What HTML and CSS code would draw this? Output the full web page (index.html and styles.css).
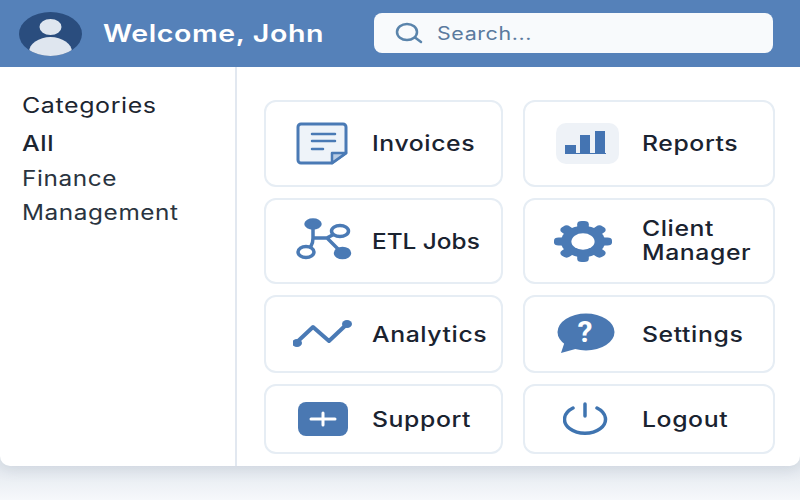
FILE: index.html
```html
<!DOCTYPE html>
<html lang="en">
<head>
    <meta charset="UTF-8">
    <title>Dashboard</title>
    <link rel="stylesheet" href="styles.css">
</head>
<body>
    <div class="app">
        <header class="topbar">
            <svg class="avatar" width="63" height="44" viewBox="0 0 63 44">
                <defs><clipPath id="avatarClip"><ellipse cx="31.5" cy="22" rx="31.5" ry="22"/></clipPath></defs>
                <ellipse cx="31.5" cy="22" rx="31.5" ry="22" fill="#2a4d7e"/>
                <g clip-path="url(#avatarClip)" fill="#dfe6ef">
                    <ellipse cx="31.5" cy="15" rx="11" ry="8"/>
                    <ellipse cx="31.5" cy="40" rx="21.5" ry="15"/>
                </g>
            </svg>
            <div class="welcome">Welcome, John</div>
            <div class="search">
                <svg width="28" height="22" viewBox="0 0 28 22" fill="none" stroke="#5a84ab" stroke-width="2.5" stroke-linecap="round">
                    <ellipse cx="12" cy="10" rx="10" ry="8"/>
                    <path d="M20 15.500 L26 20"/>
                </svg>
                <span>Search...</span>
            </div>
        </header>
        <div class="content">
            <aside class="sidebar">
                <h2>Categories</h2>
                <a class="active">All</a>
                <a>Finance</a>
                <a>Management</a>
            </aside>
            <main class="grid">
                <div class="card">
                    <div class="icon-wrap">
                        <svg width="54" height="44" viewBox="0 0 54 44">
                            <path d="M5 2H47a3 3 0 0 1 3 3V31L36 41H5a3 3 0 0 1-3-3V5a3 3 0 0 1 3-3z" fill="#eef3f9" stroke="#4a7ab5" stroke-width="3" stroke-linejoin="round"/>
                            <path d="M36 41V31H50z" fill="#b8cce4" stroke="#4a7ab5" stroke-width="2.500" stroke-linejoin="round"/>
                            <path d="M16 12H39M16 19H39M16 27H27" stroke="#4a7ab5" stroke-width="2.500" stroke-linecap="round"/>
                        </svg>
                    </div>
                    <span>Invoices</span>
                </div>
                <div class="card">
                    <div class="icon-wrap">
                        <svg width="63" height="41" viewBox="0 0 63 41">
                            <rect width="63" height="41" rx="10" fill="#eef2f7"/>
                            <path d="M9 22H20V31H9zM24 12H34V31H24zM39 8H49V31H39z" fill="#4474b2"/>
                            <path d="M9 30.500H50" stroke="#4474b2"/>
                        </svg>
                    </div>
                    <span>Reports</span>
                </div>
                <div class="card">
                    <div class="icon-wrap">
                        <svg width="58" height="46" viewBox="0 0 58 46" fill="none" stroke="#4a7ab5" stroke-width="3.500">
                            <path d="M19 6V20C19 27 16 30 12 34M19 20H33M46 13L33 20L48 35"/>
                            <ellipse cx="19" cy="6" rx="7" ry="4" fill="#4a7ab5"/>
                            <ellipse cx="46" cy="13" rx="8.500" ry="5.500" fill="#fff"/>
                            <ellipse cx="12" cy="34" rx="8" ry="5.500" fill="#fff"/>
                            <ellipse cx="48.500" cy="35" rx="7" ry="4.500" fill="#4a7ab5"/>
                        </svg>
                    </div>
                    <span class="tight">ETL Jobs</span>
                </div>
                <div class="card">
                    <div class="icon-wrap">
                        <svg class="gear" width="58" height="41" viewBox="-50 -50 100 100" preserveAspectRatio="none" fill="#4a7ab5">
                            <circle r="38"/>
                            <rect x="-50" y="-10" width="100" height="20" rx="8"/>
                            <rect x="-10" y="-50" width="20" height="100" rx="8"/>
                            <rect x="-50" y="-10" width="100" height="20" rx="8" transform="rotate(45)"/>
                            <rect x="-50" y="-10" width="100" height="20" rx="8" transform="rotate(-45)"/>
                            <circle r="20" fill="#fff"/>
                        </svg>
                    </div>
                    <span class="wrap">Client<br>Manager</span>
                </div>
                <div class="card">
                    <div class="icon-wrap">
                        <svg width="60" height="44" viewBox="0 0 60 44">
                            <path d="M3 31L20 15L36 29L54 12" fill="none" stroke="#4a7ab5" stroke-width="4" stroke-linecap="round" stroke-linejoin="round"/>
                            <ellipse cx="4" cy="31" rx="5" ry="4" fill="#4a7ab5"/>
                            <ellipse cx="54" cy="12" rx="5" ry="4" fill="#4a7ab5"/>
                        </svg>
                    </div>
                    <span>Analytics</span>
                </div>
                <div class="card">
                    <div class="icon-wrap">
                        <svg width="60" height="46" viewBox="0 0 60 46">
                            <ellipse cx="29" cy="21" rx="28.500" ry="18.500" fill="#4a78b2"/>
                            <path d="M8 30L4 42L22 37z" fill="#4a78b2"/>
                            <text x="28" y="31" class="qmark">?</text>
                        </svg>
                    </div>
                    <span>Settings</span>
                </div>
                <div class="card">
                    <div class="icon-wrap">
                        <svg width="50" height="34" viewBox="0 0 50 34">
                            <rect x="0" y="0" width="50" height="34" rx="8" fill="#4a78b2"/>
                            <path d="M13 17H37M25 11V23" stroke="#fff" stroke-width="3" stroke-linecap="round"/>
                        </svg>
                    </div>
                    <span>Support</span>
                </div>
                <div class="card">
                    <div class="icon-wrap">
                        <svg width="48" height="36" viewBox="0 0 48 36" fill="none" stroke="#3f74b0" stroke-width="3.500" stroke-linecap="round">
                            <path d="M10 7A20.500 14 0 1 0 34 7"/>
                            <path d="M22 3V15"/>
                        </svg>
                    </div>
                    <span>Logout</span>
                </div>
            </main>
        </div>
    </div>
</body>
</html>
```

FILE: styles.css
```css
body {
    margin: 0;
    height: 500px;
    overflow: hidden;
    font-family: Inter, "Liberation Sans", sans-serif;
    background: linear-gradient(to bottom, #e4e9ef 466px, #f6f8fb 500px);
}
.app {
    height: 466px;
    background: white;
    border-radius: 0 0 10px 10px;
    box-shadow: 0px 4px 14px rgba(60, 80, 110, 0.12);
    overflow: hidden;
    display: flex;
    flex-direction: column;
}
/* the lettering in this design is set wide */
.welcome,
.search span,
.sidebar h2,
.sidebar a,
.card span {
    display: inline-block;
    transform: scaleX(1.19);
    transform-origin: left center;
    letter-spacing: 0.5px;
}
.topbar {
    height: 67px;
    flex-shrink: 0;
    background: #5581b9;
    display: flex;
    align-items: center;
    padding: 0 27px 0 19px;
}
.avatar {
    margin-right: 21px;
}
.welcome {
    color: white;
    font-size: 24px;
    font-weight: 600;
}
.search {
    margin: 0 0 1px auto;
    width: 399px;
    height: 40px;
    box-sizing: border-box;
    background: #f8fafc;
    border-radius: 8px;
    display: flex;
    align-items: center;
    padding-left: 21px;
    gap: 14px;
    color: #5b7a9e;
    font-size: 18px;
}
.content {
    flex: 1;
    display: flex;
}
.sidebar {
    flex-shrink: 0;
    box-sizing: border-box;
    border-right: 2px solid #e2e8f0;
    width: 237px;
    padding: 26px 0 0 22px;
    color: #2a3440;
    font-size: 21px;
}
.sidebar h2 {
    display: block;
    margin: 0 0 13px;
    font-size: 21px;
    font-weight: 400;
    line-height: 25px;
    color: #1c2530;
}
.sidebar a {
    display: block;
    line-height: 25px;
    margin-bottom: 9px;
    transform: scaleX(1.16);
}
.sidebar a.active {
    font-weight: 500;
    color: #1c2530;
    margin-bottom: 10px;
    transform: scaleX(1.19);
}
.grid {
    flex: 1;
    display: grid;
    grid-template-columns: 239px 252px;
    grid-template-rows: 87px 86px 78px 70px;
    gap: 11px 20px;
    padding: 33px 0 0 27px;
}
.card {
    box-sizing: border-box;
    border: 2px solid #e6edf4;
    border-radius: 12px;
    display: flex;
    align-items: center;
    padding-left: 27px;
    gap: 19px;
    color: #1a2330;
    font-size: 21px;
}
.card span {
    font-weight: 500;
    transform: scaleX(1.18);
}
.card span.tight {
    letter-spacing: 0;
    transform: scaleX(1.16);
}
.icon-wrap {
    width: 60px;
    flex-shrink: 0;
    display: flex;
    justify-content: center;
}
.card:nth-child(even) {
    gap: 20px;
}
.card:nth-child(even) .icon-wrap {
    width: 70px;
}
.gear {
    margin-right: 8px;
}
.card .wrap {
    line-height: 24px;
}
.qmark {
    fill: white;
    font-family: Roboto, sans-serif;
    font-size: 30px;
    font-weight: 700;
    text-anchor: middle;
}
```
